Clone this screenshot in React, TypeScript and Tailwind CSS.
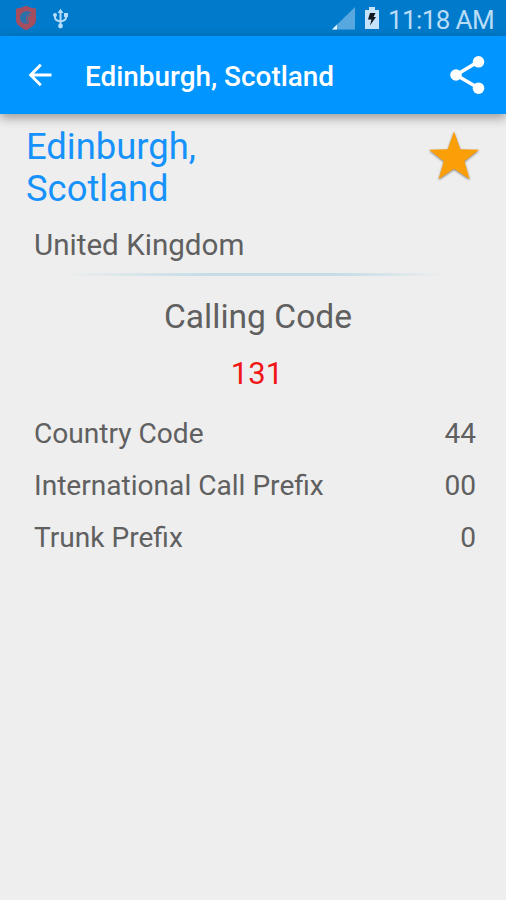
const rows = [
  { label: 'Country Code', value: '44' },
  { label: 'International Call Prefix', value: '00' },
  { label: 'Trunk Prefix', value: '0' },
];

function StatusBar() {
  return (
    <div className="flex h-[36px] shrink-0 items-start bg-[#007aca]">
      <svg className="ml-[15px] mt-[5px]" width="22" height="26" viewBox="0 0 22 26">
        <path d="M1 3.5Q6 3.5 11 0.8Q16 3.5 21 3.5V15.5C21 20 15 23 11 25.3C7 23 1 20 1 15.5Z" fill="#a44e60" />
        <path d="M16.500 7.500C11 4.500 5 7.500 5 13C5 17.500 9.500 20 14.500 18C10.500 17 8.500 11 16.500 7.500Z" fill="#2b70a8" />
        <path d="M16 10.500C12 10 11 14 14 16.500" fill="none" stroke="#4a6c98" strokeWidth="1.200" />
      </svg>
      <svg className="ml-[15px] mt-[8px]" width="18" height="22" viewBox="0 0 18 22" fill="none" stroke="#b5dcfb" strokeWidth="2">
        <path d="M8.500 3V19M3 6.500V9.500Q3 12.500 8.500 13.500Q14 12.500 14 9.500V6.500" />
        <path d="M5.500 5L8.500 .8L11.500 5Z" fill="#b5dcfb" stroke="none" />
        <circle cx="3" cy="7" r="2" fill="#b5dcfb" stroke="none" />
        <rect x="12" y="5" width="4" height="4" fill="#b5dcfb" stroke="none" />
        <circle cx="8.500" cy="18" r="2.400" fill="#b5dcfb" stroke="none" />
      </svg>
      <div className="flex-1" />
      <svg className="mt-[7px]" width="23" height="23" viewBox="0 0 23 23">
        <path d="M0 22.500L23 0V22.500Z" fill="#58a8e0" />
        <path d="M0 22.500L5 17.500V22.500Z" fill="#e4f3fe" />
      </svg>
      <svg className="ml-[9px] mt-[6px]" width="16" height="24" viewBox="0 0 16 24">
        <path d="M5 1H11V4H15V23H1V4H5Z" fill="#c5e4fb" />
        <path d="M6 7H11.500L9.500 11H12L6 19.500L7.500 13.500H4Z" fill="#101820" />
      </svg>
      <span className="ml-[8px] mr-[12px] mt-[3px] text-[26px] leading-[34px] tracking-[-0.6px] text-[#b9dcf7]">11:18 AM</span>
    </div>
  );
}

function AppBar() {
  return (
    <header className="z-10 flex h-[78px] shrink-0 items-center bg-[#0095ff] shadow-[0_4px_10px_rgba(0,0,0,0.35)]">
      <svg className="ml-[28px]" width="24" height="24" viewBox="0 0 24 24" fill="none" stroke="white" strokeWidth="2.800">
        <path d="M23.500 12H3M12.800 1.800L2.600 12L12.800 22.200" />
      </svg>
      <h1 className="ml-[33px] mt-[4px] text-[27.9px] leading-[34px] font-medium text-white">Edinburgh, Scotland</h1>
      <div className="flex-1" />
      <svg className="mr-[20px]" width="38" height="40" viewBox="0 0 38 40" fill="white">
        <path d="M30.500 6.500L8 20L30.500 33" fill="none" stroke="white" strokeWidth="3.500" />
        <circle cx="30.500" cy="6.800" r="5.800" />
        <circle cx="8" cy="20" r="5.800" />
        <circle cx="30.500" cy="33.200" r="5.800" />
      </svg>
    </header>
  );
}

export default function App() {
  return (
    <div className="flex h-[900px] w-[506px] flex-col overflow-hidden bg-[#eeeeee] font-[Roboto,sans-serif] text-[#606060]">
      <StatusBar />
      <AppBar />
      <main className="flex flex-col pt-[12px]">
        <div className="flex justify-between pl-[26px] pr-[25px]">
          <h2 className="w-[220px] text-[36.4px] leading-[42.4px] text-[#1592fb]">Edinburgh, Scotland</h2>
          <svg className="mt-[4px] drop-shadow-[0_1px_1px_rgba(0,0,0,0.45)]" width="54" height="52" viewBox="0 0 54 52">
            <path d="M27 1.500L33.400 19.300L52 19.800L37.400 31.300L42.700 49.200L27 38.800L11.500 49.200L16.800 31.300L2 19.800L20.700 19.300Z" fill="#fb9f08" />
          </svg>
        </div>
        <p className="mt-[14px] pl-[34px] text-[29.6px] leading-[40px]">United Kingdom</p>
        <div className="mx-[60px] mt-[8px] h-[3px] bg-[linear-gradient(to_right,transparent,#c5dde6_38%,#c5dde6_72%,transparent)]" />
        <h3 className="mt-[21px] pl-[10px] text-center text-[33.6px] leading-[40px]">Calling Code</h3>
        <p className="mt-[17px] pl-[8px] text-center text-[31px] leading-[40px] text-[#f01616]">131</p>
        <dl className="mt-[14px] pr-[30px] pl-[34px] text-[28.1px]">
          {rows.map((row) => (
            <div key={row.label} className="flex h-[52px] items-center justify-between">
              <dt>{row.label}</dt>
              <dd>{row.value}</dd>
            </div>
          ))}
        </dl>
      </main>
    </div>
  );
}
